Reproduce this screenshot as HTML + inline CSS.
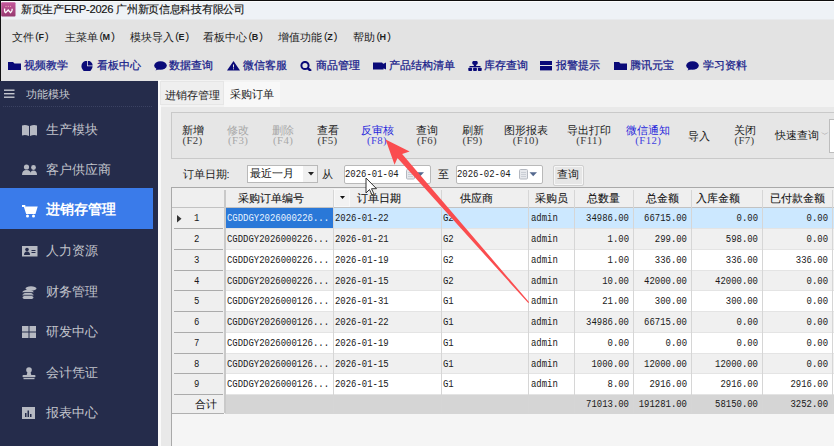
<!DOCTYPE html><html><head><meta charset="utf-8"><style>
*{margin:0;padding:0;box-sizing:border-box}
html,body{width:834px;height:446px;overflow:hidden}
body{position:relative;background:#e3e3e3;font-family:"Liberation Sans",sans-serif;color:#222;font-size:11px}
.a{position:absolute;white-space:nowrap;line-height:1}
.menu{top:32px;font-size:10.6px;color:#1e1e1e}
.mk{font-family:"Liberation Mono",monospace;font-size:11px;letter-spacing:-2.2px;margin-left:0.5px;position:relative;top:-0.8px}
.mk b{font-family:"Liberation Sans",sans-serif;font-size:9px;letter-spacing:-0.6px}
.tb{top:60px;font-size:10.8px;color:#16208a;-webkit-text-stroke:0.25px #16208a}
.si{left:46px;font-size:13.2px;color:#c2c4cc;font-weight:300}
.mono{font-family:"Liberation Mono",monospace}
.btn{font-size:10.6px;color:#1a1a1a;text-align:center}
.btn .k{font-family:"Liberation Serif",serif;font-size:10.8px;letter-spacing:0.4px;display:block;margin-top:-0.5px}
.btn .k{color:#3c3c3c}
.dis,.btn.dis .k{color:#a8a8a8}
.btn.blu .k{color:#4242e0}
.blu{color:#2626dc}
.cell{font-family:"Liberation Mono",monospace;font-size:11.2px;color:#1a1a1a;transform-origin:0 0;transform:scaleX(0.80)}
.num{font-family:"Liberation Mono",monospace;font-size:11.2px;color:#1a1a1a;transform-origin:100% 0;transform:scaleX(0.80);text-align:right}
.hdr{font-size:11px;color:#151515;-webkit-text-stroke:0.1px #151515}
</style></head><body>
<div class="a" style="left:0;top:0;width:834px;height:20px;background:#eef2f6;border-top:1px solid #0d0d0d"></div>
<div class="a" style="left:0;top:1px;width:834px;height:1px;background:#fbfcfd"></div>
<div class="a" style="left:0;top:19px;width:834px;height:1px;background:#e8eaec"></div>
<svg class="a" style="left:1px;top:1.5px" width="15" height="15" viewBox="0 0 15 15"><defs><linearGradient id="ig" x1="0" y1="0" x2="0" y2="1"><stop offset="0" stop-color="#c4589c"/><stop offset="1" stop-color="#963a70"/></linearGradient></defs><rect x="0.2" y="0.3" width="14.3" height="14.2" rx="1" fill="url(#ig)"/><path d="M3.6 6.5 Q3.3 10 4.6 10.6 L7.2 8 L9.6 10.6 Q11.4 9.5 11.2 6.8" stroke="#fff" stroke-width="1.3" fill="none"/><circle cx="5" cy="4.3" r="0.55" fill="#ffc8c0"/><circle cx="7.3" cy="4.3" r="0.55" fill="#ffc8c0"/><circle cx="9.6" cy="4.3" r="0.55" fill="#ffc8c0"/></svg>
<div class="a" style="left:21px;top:4px;font-size:11.2px;letter-spacing:-0.28px;color:#141414;-webkit-text-stroke:0.15px #141414">新页生产ERP-2026 广州新页信息科技有限公司</div>
<div class="a" style="left:0;top:0;width:1px;height:446px;background:#111"></div>
<div class="a menu" style="left:11.5px">文件<span class="mk">(<b>F</b>)</span></div>
<div class="a menu" style="left:64.7px">主菜单<span class="mk">(<b>M</b>)</span></div>
<div class="a menu" style="left:129.5px">模块导入<span class="mk">(<b>E</b>)</span></div>
<div class="a menu" style="left:202.8px">看板中心<span class="mk">(<b>B</b>)</span></div>
<div class="a menu" style="left:278.3px">增值功能<span class="mk">(<b>Z</b>)</span></div>
<div class="a menu" style="left:352.7px">帮助<span class="mk">(<b>H</b>)</span></div>
<svg class="a" style="left:8.4px;top:60.8px" width="14" height="10" viewBox="0 0 14 10"><path d="M0 1h5l1.5 1.5H13v6.5H0z" fill="#0a0a78"/></svg>
<div class="a tb" style="left:24px">视频教学</div>
<svg class="a" style="left:81px;top:60.8px" width="13" height="10" viewBox="0 0 13 10"><path d="M6 -0.3a5.6 5.6 0 1 0 5.6 5.6H6z M6.8 -0.3a5 5 0 0 1 4.9 4.9H6.8z" fill="#0a0a78"/></svg>
<div class="a tb" style="left:97px">看板中心</div>
<svg class="a" style="left:153.5px;top:60.8px" width="13.5" height="10" viewBox="0 0 13.5 10"><ellipse cx="6.5" cy="4.5" rx="6.3" ry="4.3" fill="#0a0a78"/><path d="M1.5 9.5l2-3 2 1.5z" fill="#0a0a78"/></svg>
<div class="a tb" style="left:169px">数据查询</div>
<svg class="a" style="left:226.8px;top:60.8px" width="13.5" height="10" viewBox="0 0 13.5 10"><path d="M6.5 0L13 9.5H0z" fill="#0a0a78"/><rect x="6" y="3.5" width="1" height="3" fill="#e3e3e3"/><rect x="6" y="7.3" width="1" height="1" fill="#e3e3e3"/></svg>
<div class="a tb" style="left:242.8px">微信客服</div>
<svg class="a" style="left:300px;top:60.8px" width="12.5" height="10" viewBox="0 0 12.5 10"><circle cx="5" cy="4.5" r="3.6" stroke="#0a0a78" stroke-width="2" fill="none"/><path d="M7.5 7l3.5 3" stroke="#0a0a78" stroke-width="2.4"/></svg>
<div class="a tb" style="left:315.5px">商品管理</div>
<svg class="a" style="left:373px;top:60.8px" width="13" height="10" viewBox="0 0 13 10"><path d="M0 1.5h9l1.5 1.5v5.5H0z M10 3l3-1.5v7L10 7z" fill="#0a0a78"/></svg>
<div class="a tb" style="left:388.8px">产品结构清单</div>
<svg class="a" style="left:468px;top:60.8px" width="14" height="10" viewBox="0 0 14 10"><ellipse cx="7" cy="1.8" rx="2.8" ry="2.2" fill="#0a0a78"/><rect x="5.8" y="3" width="2.4" height="3" fill="#0a0a78"/><rect x="1.5" y="5" width="11" height="1.3" fill="#0a0a78"/><rect x="0.3" y="6.8" width="3.8" height="3.2" rx="0.8" fill="#0a0a78"/><rect x="5.1" y="6.8" width="3.8" height="3.2" rx="0.8" fill="#0a0a78"/><rect x="9.9" y="6.8" width="3.8" height="3.2" rx="0.8" fill="#0a0a78"/></svg>
<div class="a tb" style="left:483.5px">库存查询</div>
<svg class="a" style="left:540.3px;top:60.8px" width="13" height="10" viewBox="0 0 13 10"><rect x="0" y="-0.6" width="12" height="4.6" fill="#0a0a78"/><rect x="0" y="5" width="12" height="4.4" fill="#0a0a78"/></svg>
<div class="a tb" style="left:556.4px">报警提示</div>
<svg class="a" style="left:613.5px;top:60.8px" width="13.5" height="10" viewBox="0 0 13.5 10"><path d="M0 1h5l1.5 1.5H13v6.5H0z" fill="#0a0a78"/></svg>
<div class="a tb" style="left:629.5px">腾讯元宝</div>
<svg class="a" style="left:686px;top:60.8px" width="13.5" height="10" viewBox="0 0 13.5 10"><ellipse cx="6.5" cy="4.5" rx="6.3" ry="4.3" fill="#0a0a78"/><path d="M1.5 9.5l2-3 2 1.5z" fill="#0a0a78"/></svg>
<div class="a tb" style="left:702.6px">学习资料</div>
<div class="a" style="left:0;top:81px;width:158px;height:365px;background:#252c4b"></div>
<svg class="a" style="left:4px;top:88.5px" width="11" height="9"><rect x="0" y="0.5" width="10.5" height="1.4" fill="#c6c8d0"/><rect x="0" y="4" width="10.5" height="1.4" fill="#c6c8d0"/><rect x="0" y="7.5" width="10.5" height="1.4" fill="#c6c8d0"/></svg>
<div class="a" style="left:26px;top:88.5px;font-size:10.8px;color:#c6c8d0">功能模块</div>
<div class="a" style="left:3px;top:106px;width:149px;height:0;border-top:1px dotted #3b4262"></div>
<div class="a" style="left:0;top:188px;width:153px;height:41px;background:#3a7bea"></div>
<svg class="a" style="left:21.6px;top:123.5px" width="16" height="13" viewBox="0 0 16 13"><path d="M0 1.5q3.5-1 7 0.5v10q-3.5-1.5-7-0.5z M8 2q3.5-1.5 7-0.5v10q-3.5-1-7 0.5z" fill="#b6b9c2"/></svg>
<div class="a si" style="top:122.5px">生产模块</div>
<svg class="a" style="left:21.6px;top:164.2px" width="16" height="13" viewBox="0 0 16 13"><circle cx="4.5" cy="3" r="2.6" fill="#b6b9c2"/><path d="M0 11q0-5 4.5-5t4.5 5z" fill="#b6b9c2"/><circle cx="11.5" cy="3.5" r="2.4" fill="#b6b9c2"/><path d="M8 11q0-4.5 3.5-4.5t3.5 4.5z" fill="#b6b9c2"/></svg>
<div class="a si" style="top:163.2px">客户供应商</div>
<svg class="a" style="left:21.6px;top:204.5px" width="16" height="13" viewBox="0 0 16 13"><path d="M0 1h2.5l2.3 7h8l1.7-5.5H4" stroke="#fff" stroke-width="1.8" fill="none"/><rect x="4" y="3" width="9.5" height="4" fill="#fff"/><circle cx="5.5" cy="11" r="1.5" fill="#fff"/><circle cx="11.5" cy="11" r="1.5" fill="#fff"/></svg>
<div class="a si" style="top:203.2px;color:#fff;font-weight:bold;font-size:13.8px">进销存管理</div>
<svg class="a" style="left:21.6px;top:245px" width="16" height="13" viewBox="0 0 16 13"><rect x="0" y="1" width="15.5" height="10.5" fill="#b6b9c2"/><circle cx="5" cy="4.6" r="1.8" fill="#252c4b"/><path d="M2 10q0-3.5 3-3.5t3 3.5z" fill="#252c4b"/><rect x="9.5" y="5" width="4" height="1" fill="#252c4b"/><rect x="9.5" y="7" width="4" height="1" fill="#252c4b"/></svg>
<div class="a si" style="top:244px">人力资源</div>
<svg class="a" style="left:21.6px;top:285.9px" width="16" height="13" viewBox="0 0 16 13"><ellipse cx="9" cy="2.5" rx="5.5" ry="2.2" fill="#b6b9c2"/><ellipse cx="6" cy="6" rx="5.5" ry="2.2" fill="#b6b9c2"/><ellipse cx="6" cy="9" rx="5.5" ry="2.2" fill="#b6b9c2"/><ellipse cx="6" cy="11.5" rx="5.5" ry="2.2" fill="#b6b9c2"/><path d="M1 6.5h10M1 9.3h10" stroke="#252c4b" stroke-width="0.8"/></svg>
<div class="a si" style="top:284.9px">财务管理</div>
<svg class="a" style="left:21.6px;top:326.4px" width="16" height="13" viewBox="0 0 16 13"><rect x="0" y="0" width="6.5" height="5.5" fill="#b6b9c2"/><rect x="7.5" y="0" width="6.5" height="5.5" fill="#b6b9c2"/><rect x="0" y="6.5" width="6.5" height="5.5" fill="#b6b9c2"/><rect x="7.5" y="6.5" width="6.5" height="5.5" fill="#b6b9c2"/></svg>
<div class="a si" style="top:325.4px">研发中心</div>
<svg class="a" style="left:21.6px;top:367px" width="16" height="13" viewBox="0 0 16 13"><circle cx="7" cy="3" r="2.8" fill="#b6b9c2"/><path d="M5.5 5h3l0.8 3H4.7z" fill="#b6b9c2"/><rect x="0.5" y="8" width="13" height="2.3" rx="1" fill="#b6b9c2"/><rect x="1.5" y="11" width="11" height="1.2" fill="#b6b9c2"/></svg>
<div class="a si" style="top:366px">会计凭证</div>
<svg class="a" style="left:21.6px;top:407.4px" width="16" height="13" viewBox="0 0 16 13"><rect x="0" y="0" width="13" height="12" fill="#b6b9c2"/><rect x="3" y="6" width="1.5" height="4" fill="#252c4b"/><rect x="5.5" y="3.5" width="1.5" height="6.5" fill="#252c4b"/><rect x="8" y="7" width="1.5" height="3" fill="#252c4b"/></svg>
<div class="a si" style="top:406.4px">报表中心</div>
<div class="a" style="left:158px;top:80px;width:676px;height:366px;background:#e9e9e9"></div>
<div class="a" style="left:158px;top:80px;width:3px;height:366px;background:#fafafa"></div>
<div class="a" style="left:161px;top:80px;width:673px;height:27px;background:#f3f3f3"></div>
<div class="a" style="left:160px;top:81px;width:63.5px;height:24px;background:#efefef;border:1px solid #e6e6e6"></div>
<div class="a" style="left:223.5px;top:81.5px;width:56px;height:25px;background:#f8f8f8"></div>
<div class="a" style="left:164.7px;top:90px;font-size:10.8px;color:#1a1a1a">进销存管理</div>
<div class="a" style="left:230px;top:88.5px;font-size:10.6px;color:#1a1a1a">采购订单</div>
<div class="a" style="left:170.5px;top:112px;width:680px;height:47px;background:#e6e6e6;border:1px solid #c9c9c9"></div>
<div class="a btn " style="left:162.5px;width:60px;top:125px">新增<span class="k">(F2)</span></div>
<div class="a btn dis" style="left:208.1px;width:60px;top:125px">修改<span class="k">(F3)</span></div>
<div class="a btn dis" style="left:253.2px;width:60px;top:125px">删除<span class="k">(F4)</span></div>
<div class="a btn " style="left:297.5px;width:60px;top:125px">查看<span class="k">(F5)</span></div>
<div class="a btn blu" style="left:347px;width:60px;top:125px">反审核<span class="k">(F8)</span></div>
<div class="a btn " style="left:397px;width:60px;top:125px">查询<span class="k">(F6)</span></div>
<div class="a btn " style="left:442.5px;width:60px;top:125px">刷新<span class="k">(F9)</span></div>
<div class="a btn " style="left:495.79999999999995px;width:60px;top:125px">图形报表<span class="k">(F10)</span></div>
<div class="a btn " style="left:559.1px;width:60px;top:125px">导出打印<span class="k">(F11)</span></div>
<div class="a btn blu" style="left:618.3px;width:60px;top:125px">微信通知<span class="k">(F12)</span></div>
<div class="a btn " style="left:714.5px;width:60px;top:125px">关闭<span class="k">(F7)</span></div>
<div class="a btn" style="left:678.5px;width:40px;top:130.5px">导入</div>
<div class="a" style="left:774.8px;top:129.5px;font-size:10.8px;color:#1a1a1a">快速查询</div>
<div class="a" style="left:820.5px;top:131px;font-size:8px;color:#9a9a9a">﹀</div>
<div class="a" style="left:828.5px;top:119px;width:10px;height:34px;background:#fff;border:1px solid #bdbdbd"></div>
<div class="a" style="left:182.5px;top:168.5px;font-size:10.8px;color:#1a1a1a">订单日期:</div>
<div class="a" style="left:247.3px;top:165.3px;width:70.5px;height:17.5px;background:#fff;border:1px solid #b9b9b9"></div>
<div class="a" style="left:303px;top:166.3px;width:14px;height:15.5px;background:#f0f0f0"></div>
<div class="a" style="left:249.5px;top:168px;font-size:11px;color:#111">最近一月</div>
<svg class="a" style="left:307.5px;top:172px" width="6" height="4"><path d="M0 0h6L3 3.5z" fill="#222"/></svg>
<div class="a" style="left:321.6px;top:168.5px;font-size:10.8px;color:#1a1a1a">从</div>
<div class="a" style="left:343.5px;top:165.3px;width:87px;height:19px;background:#fff;border:1px solid #b9b9b9;border-radius:2px"></div>
<div class="a cell" style="left:344.8px;top:169px">2026-01-04</div>
<div class="a" style="left:437.9px;top:168.5px;font-size:10.8px;color:#1a1a1a">至</div>
<div class="a" style="left:456px;top:165.3px;width:87px;height:19px;background:#fff;border:1px solid #b9b9b9;border-radius:2px"></div>
<div class="a cell" style="left:457.3px;top:169px">2026-02-04</div>
<svg class="a" style="left:406px;top:169px" width="19" height="11"><rect x="0.5" y="0.5" width="8" height="9.5" rx="1" fill="#e6e8ec" stroke="#b4b8c0" stroke-width="1"/><path d="M2 3.5h5M2 5.5h5M2 7.5h5" stroke="#c4c8d0" stroke-width="0.8"/><path d="M10.5 3.2h7.5L14.2 7.3z" fill="#55698f"/></svg>
<svg class="a" style="left:518.5px;top:169px" width="19" height="11"><rect x="0.5" y="0.5" width="8" height="9.5" rx="1" fill="#e6e8ec" stroke="#b4b8c0" stroke-width="1"/><path d="M2 3.5h5M2 5.5h5M2 7.5h5" stroke="#c4c8d0" stroke-width="0.8"/><path d="M10.5 3.2h7.5L14.2 7.3z" fill="#55698f"/></svg>
<div class="a" style="left:552.8px;top:164.5px;width:31px;height:21px;background:#e6e6e6;border:1px solid #d0d0d0;border-radius:2px;box-shadow:inset 0 0 0 1px #f6f6f6"></div>
<div class="a" style="left:557px;top:169px;font-size:10.8px;color:#1a1a1a">查询</div>
<div class="a" style="left:171px;top:187px;width:670px;height:260px;background:#f5f5f5;border-left:1px solid #a9a9a9;border-top:1px solid #a9a9a9"></div>
<div class="a" style="left:172px;top:188px;width:662px;height:19px;background:#efefef"></div>
<div class="a" style="left:225px;top:208px;width:609px;height:21px;background:#cce8ff"></div>
<div class="a" style="left:225px;top:229px;width:609px;height:21px;background:#f0f0f0"></div>
<div class="a" style="left:225px;top:250px;width:609px;height:21px;background:#ffffff"></div>
<div class="a" style="left:225px;top:271px;width:609px;height:20px;background:#f0f0f0"></div>
<div class="a" style="left:225px;top:291px;width:609px;height:21px;background:#ffffff"></div>
<div class="a" style="left:225px;top:312px;width:609px;height:21px;background:#f0f0f0"></div>
<div class="a" style="left:225px;top:333px;width:609px;height:21px;background:#ffffff"></div>
<div class="a" style="left:225px;top:354px;width:609px;height:20px;background:#f0f0f0"></div>
<div class="a" style="left:225px;top:374px;width:609px;height:21px;background:#ffffff"></div>
<div class="a" style="left:225px;top:395px;width:609px;height:19px;background:#d5d5d5"></div>
<div class="a" style="left:172px;top:207px;width:53px;height:206px;background:#efefef"></div>
<div class="a" style="left:226px;top:208px;width:107px;height:20px;background:#2a78d8"></div>
<div class="a" style="left:174px;top:228px;width:49px;height:1px;background:#ababab"></div>
<div class="a" style="left:174px;top:249px;width:49px;height:1px;background:#ababab"></div>
<div class="a" style="left:174px;top:270px;width:49px;height:1px;background:#ababab"></div>
<div class="a" style="left:174px;top:290px;width:49px;height:1px;background:#ababab"></div>
<div class="a" style="left:174px;top:311px;width:49px;height:1px;background:#ababab"></div>
<div class="a" style="left:174px;top:332px;width:49px;height:1px;background:#ababab"></div>
<div class="a" style="left:174px;top:353px;width:49px;height:1px;background:#ababab"></div>
<div class="a" style="left:174px;top:373px;width:49px;height:1px;background:#ababab"></div>
<div class="a" style="left:174px;top:394px;width:49px;height:1px;background:#ababab"></div>
<div class="a" style="left:172px;top:413px;width:52px;height:1px;background:#b0b0b0"></div>
<div class="a" style="left:172px;top:207px;width:662px;height:1px;background:#c2c2c2"></div>
<div class="a" style="left:226px;top:228px;width:608px;height:1px;background:#e4e4e4"></div>
<div class="a" style="left:226px;top:249px;width:608px;height:1px;background:#e4e4e4"></div>
<div class="a" style="left:226px;top:270px;width:608px;height:1px;background:#e4e4e4"></div>
<div class="a" style="left:226px;top:290px;width:608px;height:1px;background:#e4e4e4"></div>
<div class="a" style="left:226px;top:311px;width:608px;height:1px;background:#e4e4e4"></div>
<div class="a" style="left:226px;top:332px;width:608px;height:1px;background:#e4e4e4"></div>
<div class="a" style="left:226px;top:353px;width:608px;height:1px;background:#e4e4e4"></div>
<div class="a" style="left:226px;top:373px;width:608px;height:1px;background:#e4e4e4"></div>
<div class="a" style="left:226px;top:394px;width:608px;height:1px;background:#e4e4e4"></div>
<div class="a" style="left:224px;top:190px;width:2px;height:223px;background:#c9c9c9"></div>
<div class="a" style="left:333px;top:190px;width:1px;height:223px;background:#d6d6d6"></div>
<div class="a" style="left:441px;top:190px;width:1px;height:223px;background:#d6d6d6"></div>
<div class="a" style="left:528px;top:190px;width:1px;height:223px;background:#d6d6d6"></div>
<div class="a" style="left:574px;top:190px;width:1px;height:223px;background:#d6d6d6"></div>
<div class="a" style="left:633px;top:190px;width:1px;height:223px;background:#d6d6d6"></div>
<div class="a" style="left:691px;top:190px;width:1px;height:223px;background:#d6d6d6"></div>
<div class="a" style="left:762px;top:190px;width:1px;height:223px;background:#d6d6d6"></div>
<div class="a" style="left:832px;top:190px;width:1px;height:223px;background:#d6d6d6"></div>
<svg class="a" style="left:177.2px;top:214.6px" width="5" height="8"><path d="M0 0L4.5 3.8L0 7.6z" fill="#333"/></svg>
<div class="a cell" style="left:194.2px;top:213.0px">1</div>
<div class="a cell" style="left:226.5px;top:213.0px;color:#e8f4ff">CGDDGY2026000226...</div>
<div class="a cell" style="left:334.5px;top:213.0px">2026-01-22</div>
<div class="a cell" style="left:443px;top:213.0px">G2</div>
<div class="a cell" style="left:531.3px;top:213.0px">admin</div>
<div class="a num" style="left:508.79999999999995px;width:120px;top:213.0px">34986.00</div>
<div class="a num" style="left:567.3px;width:120px;top:213.0px">66715.00</div>
<div class="a num" style="left:638.0999999999999px;width:120px;top:213.0px">0.00</div>
<div class="a num" style="left:708.0999999999999px;width:120px;top:213.0px">0.00</div>
<div class="a cell" style="left:194.2px;top:234.0px">2</div>
<div class="a cell" style="left:226.5px;top:234.0px;color:#1a1a1a">CGDDGY2026000226...</div>
<div class="a cell" style="left:334.5px;top:234.0px">2026-01-21</div>
<div class="a cell" style="left:443px;top:234.0px">G2</div>
<div class="a cell" style="left:531.3px;top:234.0px">admin</div>
<div class="a num" style="left:508.79999999999995px;width:120px;top:234.0px">1.00</div>
<div class="a num" style="left:567.3px;width:120px;top:234.0px">299.00</div>
<div class="a num" style="left:638.0999999999999px;width:120px;top:234.0px">598.00</div>
<div class="a num" style="left:708.0999999999999px;width:120px;top:234.0px">0.00</div>
<div class="a cell" style="left:194.2px;top:255.0px">3</div>
<div class="a cell" style="left:226.5px;top:255.0px;color:#1a1a1a">CGDDGY2026000226...</div>
<div class="a cell" style="left:334.5px;top:255.0px">2026-01-19</div>
<div class="a cell" style="left:443px;top:255.0px">G2</div>
<div class="a cell" style="left:531.3px;top:255.0px">admin</div>
<div class="a num" style="left:508.79999999999995px;width:120px;top:255.0px">1.00</div>
<div class="a num" style="left:567.3px;width:120px;top:255.0px">336.00</div>
<div class="a num" style="left:638.0999999999999px;width:120px;top:255.0px">336.00</div>
<div class="a num" style="left:708.0999999999999px;width:120px;top:255.0px">336.00</div>
<div class="a cell" style="left:194.2px;top:276.0px">4</div>
<div class="a cell" style="left:226.5px;top:276.0px;color:#1a1a1a">CGDDGY2026000226...</div>
<div class="a cell" style="left:334.5px;top:276.0px">2026-01-15</div>
<div class="a cell" style="left:443px;top:276.0px">G2</div>
<div class="a cell" style="left:531.3px;top:276.0px">admin</div>
<div class="a num" style="left:508.79999999999995px;width:120px;top:276.0px">10.00</div>
<div class="a num" style="left:567.3px;width:120px;top:276.0px">42000.00</div>
<div class="a num" style="left:638.0999999999999px;width:120px;top:276.0px">42000.00</div>
<div class="a num" style="left:708.0999999999999px;width:120px;top:276.0px">0.00</div>
<div class="a cell" style="left:194.2px;top:296.0px">5</div>
<div class="a cell" style="left:226.5px;top:296.0px;color:#1a1a1a">CGDDGY2026000126...</div>
<div class="a cell" style="left:334.5px;top:296.0px">2026-01-31</div>
<div class="a cell" style="left:443px;top:296.0px">G1</div>
<div class="a cell" style="left:531.3px;top:296.0px">admin</div>
<div class="a num" style="left:508.79999999999995px;width:120px;top:296.0px">21.00</div>
<div class="a num" style="left:567.3px;width:120px;top:296.0px">300.00</div>
<div class="a num" style="left:638.0999999999999px;width:120px;top:296.0px">300.00</div>
<div class="a num" style="left:708.0999999999999px;width:120px;top:296.0px">0.00</div>
<div class="a cell" style="left:194.2px;top:317.0px">6</div>
<div class="a cell" style="left:226.5px;top:317.0px;color:#1a1a1a">CGDDGY2026000126...</div>
<div class="a cell" style="left:334.5px;top:317.0px">2026-01-22</div>
<div class="a cell" style="left:443px;top:317.0px">G1</div>
<div class="a cell" style="left:531.3px;top:317.0px">admin</div>
<div class="a num" style="left:508.79999999999995px;width:120px;top:317.0px">34986.00</div>
<div class="a num" style="left:567.3px;width:120px;top:317.0px">66715.00</div>
<div class="a num" style="left:638.0999999999999px;width:120px;top:317.0px">0.00</div>
<div class="a num" style="left:708.0999999999999px;width:120px;top:317.0px">0.00</div>
<div class="a cell" style="left:194.2px;top:338.0px">7</div>
<div class="a cell" style="left:226.5px;top:338.0px;color:#1a1a1a">CGDDGY2026000126...</div>
<div class="a cell" style="left:334.5px;top:338.0px">2026-01-19</div>
<div class="a cell" style="left:443px;top:338.0px">G1</div>
<div class="a cell" style="left:531.3px;top:338.0px">admin</div>
<div class="a num" style="left:508.79999999999995px;width:120px;top:338.0px">0.00</div>
<div class="a num" style="left:567.3px;width:120px;top:338.0px">0.00</div>
<div class="a num" style="left:638.0999999999999px;width:120px;top:338.0px">0.00</div>
<div class="a num" style="left:708.0999999999999px;width:120px;top:338.0px">0.00</div>
<div class="a cell" style="left:194.2px;top:359.0px">8</div>
<div class="a cell" style="left:226.5px;top:359.0px;color:#1a1a1a">CGDDGY2026000126...</div>
<div class="a cell" style="left:334.5px;top:359.0px">2026-01-15</div>
<div class="a cell" style="left:443px;top:359.0px">G1</div>
<div class="a cell" style="left:531.3px;top:359.0px">admin</div>
<div class="a num" style="left:508.79999999999995px;width:120px;top:359.0px">1000.00</div>
<div class="a num" style="left:567.3px;width:120px;top:359.0px">12000.00</div>
<div class="a num" style="left:638.0999999999999px;width:120px;top:359.0px">12000.00</div>
<div class="a num" style="left:708.0999999999999px;width:120px;top:359.0px">0.00</div>
<div class="a cell" style="left:194.2px;top:379.0px">9</div>
<div class="a cell" style="left:226.5px;top:379.0px;color:#1a1a1a">CGDDGY2026000126...</div>
<div class="a cell" style="left:334.5px;top:379.0px">2026-01-15</div>
<div class="a cell" style="left:443px;top:379.0px">G1</div>
<div class="a cell" style="left:531.3px;top:379.0px">admin</div>
<div class="a num" style="left:508.79999999999995px;width:120px;top:379.0px">8.00</div>
<div class="a num" style="left:567.3px;width:120px;top:379.0px">2916.00</div>
<div class="a num" style="left:638.0999999999999px;width:120px;top:379.0px">2916.00</div>
<div class="a num" style="left:708.0999999999999px;width:120px;top:379.0px">2916.00</div>
<div class="a" style="left:194.7px;top:398.5px;font-size:11px;color:#151515">合计</div>
<div class="a num" style="left:508.79999999999995px;width:120px;top:399.2px">71013.00</div>
<div class="a num" style="left:567.3px;width:120px;top:399.2px">191281.00</div>
<div class="a num" style="left:638.0999999999999px;width:120px;top:399.2px">58150.00</div>
<div class="a num" style="left:708.0999999999999px;width:120px;top:399.2px">3252.00</div>
<div class="a hdr" style="left:237.5px;top:193px">采购订单编号</div>
<div class="a hdr" style="left:356.6px;top:193px">订单日期</div>
<div class="a hdr" style="left:459.7px;top:193px">供应商</div>
<div class="a hdr" style="left:534.6px;top:193px">采购员</div>
<div class="a hdr" style="left:587.3px;top:193px">总数量</div>
<div class="a hdr" style="left:645.8px;top:193px">总金额</div>
<div class="a hdr" style="left:696px;top:193px">入库金额</div>
<div class="a hdr" style="left:770px;top:193px">已付款金额</div>
<div class="a" style="left:334px;top:189px;width:16px;height:17.5px;background:#f2f2f2;border:1px solid #f8f8f8"></div>
<svg class="a" style="left:339.8px;top:196.3px" width="5" height="3"><path d="M0 0h5L2.5 3z" fill="#111"/></svg>
<svg class="a" style="left:0;top:0" width="834" height="446" viewBox="0 0 834 446"><path d="M385.6 139.4 L409.6 151.61 L402.13 153.9 L529.15 302.3 L528.25 303.1 L397.47 157.99 L394.56 164.79 Z" fill="#fa4d4f"/></svg>
<svg class="a" style="left:365px;top:177px" width="14" height="20" viewBox="0 0 14 20"><path d="M1 1v15l3.5-3.5 2.5 5.5 2-1-2.5-5.3h5z" fill="#fff" stroke="#333" stroke-width="1"/></svg>
</body></html>
